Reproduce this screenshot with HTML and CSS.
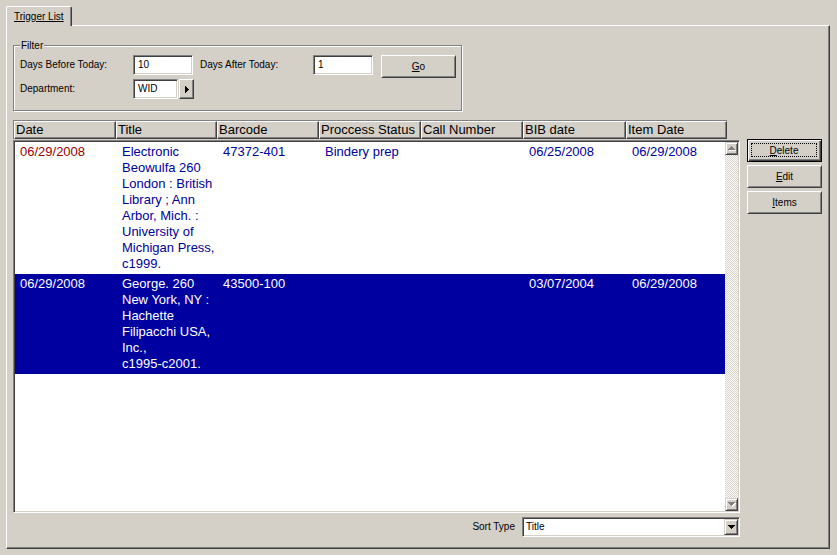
FILE: index.html
```html
<!DOCTYPE html>
<html>
<head>
<meta charset="utf-8">
<title>Trigger List</title>
<link rel="stylesheet" href="styles.css">
</head>
<body>
<div class="window">
  <div class="tabs">
    <div class="tab"><span class="u">Trigger List</span></div>
  </div>
  <div class="panel">
    <div class="main">
      <div class="group">
        <span class="group-title">Filter</span>
        <div class="filter-grid">
          <span class="lbl">Days Before Today:</span>
          <div class="field f-days">10</div>
          <span></span>
          <span class="lbl">Days After Today:</span>
          <div class="field f-days">1</div>
          <span></span>
          <div class="btn go"><span><span class="u">G</span>o</span></div>
          <span class="lbl">Department:</span>
          <div class="dept">
            <div class="field f-dept">WID</div>
            <div class="arrow-btn">
              <svg width="4" height="7" viewBox="0 0 4 7" shape-rendering="crispEdges"><rect x="0" y="0" width="1" height="7"/><rect x="1" y="1" width="1" height="5"/><rect x="2" y="2" width="1" height="3"/><rect x="3" y="3" width="1" height="1"/></svg>
            </div>
          </div>
        </div>
      </div>

      <div class="grid-header">
        <div class="hcell c1">Date</div>
        <div class="hcell c2">Title</div>
        <div class="hcell c3">Barcode</div>
        <div class="hcell c4">Proccess Status</div>
        <div class="hcell c5">Call Number</div>
        <div class="hcell c6">BIB date</div>
        <div class="hcell c7">Item Date</div>
      </div>

      <div class="list">
        <div class="rows">
          <div class="row">
            <div class="cell red">06/29/2008</div>
            <div class="cell">Electronic<br>Beowulfa 260<br>London : British<br>Library ; Ann<br>Arbor, Mich. :<br>University of<br>Michigan Press,<br>c1999.</div>
            <div class="cell">47372-401</div>
            <div class="cell">Bindery prep</div>
            <div class="cell"></div>
            <div class="cell">06/25/2008</div>
            <div class="cell">06/29/2008</div>
          </div>
          <div class="row sel">
            <div class="cell">06/29/2008</div>
            <div class="cell">George. 260<br>New York, NY :<br>Hachette<br>Filipacchi USA,<br>Inc.,<br>c1995-c2001.</div>
            <div class="cell">43500-100</div>
            <div class="cell"></div>
            <div class="cell"></div>
            <div class="cell">03/07/2004</div>
            <div class="cell">06/29/2008</div>
          </div>
        </div>
        <div class="vscroll">
          <div class="sbtn">
            <svg width="8" height="5" viewBox="0 0 8 5" shape-rendering="crispEdges"><g fill="#fff"><rect x="4" y="1" width="1" height="1"/><rect x="3" y="2" width="3" height="1"/><rect x="2" y="3" width="5" height="1"/><rect x="1" y="4" width="7" height="1"/></g><g fill="#808080"><rect x="3" y="0" width="1" height="1"/><rect x="2" y="1" width="3" height="1"/><rect x="1" y="2" width="5" height="1"/><rect x="0" y="3" width="7" height="1"/></g></svg>
          </div>
          <div class="track"></div>
          <div class="sbtn">
            <svg width="8" height="5" viewBox="0 0 8 5" shape-rendering="crispEdges"><g fill="#fff"><rect x="1" y="1" width="7" height="1"/><rect x="2" y="2" width="5" height="1"/><rect x="3" y="3" width="3" height="1"/><rect x="4" y="4" width="1" height="1"/></g><g fill="#808080"><rect x="0" y="0" width="7" height="1"/><rect x="1" y="1" width="5" height="1"/><rect x="2" y="2" width="3" height="1"/><rect x="3" y="3" width="1" height="1"/></g></svg>
          </div>
        </div>
      </div>

      <div class="sort">
        <span class="lbl sort-lbl">Sort Type</span>
        <div class="combo">
          <span class="combo-text">Title</span>
          <div class="combo-btn">
            <svg width="7" height="4" viewBox="0 0 7 4" shape-rendering="crispEdges"><rect x="0" y="0" width="7" height="1"/><rect x="1" y="1" width="5" height="1"/><rect x="2" y="2" width="3" height="1"/><rect x="3" y="3" width="1" height="1"/></svg>
          </div>
        </div>
      </div>
    </div>

    <div class="side">
      <div class="btn default"><span class="focus"><span class="u">D</span>elete</span></div>
      <div class="btn"><span><span class="u">E</span>dit</span></div>
      <div class="btn"><span><span class="u">I</span>tems</span></div>
    </div>
  </div>
</div>
</body>
</html>
```

FILE: styles.css
```css
* {
  box-sizing: border-box;
  margin: 0;
  padding: 0;
}

body {
  margin: 0;
  background: #d4d0c8;
  font-family: "Liberation Sans", Arial, sans-serif;
  font-size: 10px;
  color: #000;
}

.u {
  text-decoration: underline;
}

.window {
  width: 837px;
  height: 555px;
  background: #d4d0c8;
  overflow: hidden;
}

/* ---- tab strip ---- */
.tabs {
  height: 25px;
  padding-left: 6px;
  display: flex;
  align-items: flex-end;
}

.tab {
  position: relative;
  z-index: 1;
  width: 66px;
  height: 20px;
  margin-bottom: -1px;
  background: #d4d0c8;
  border-top: 1px solid #fff;
  border-left: 1px solid #fff;
  border-right: 1px solid #404040;
  border-radius: 2px 2px 0 0;
  box-shadow: inset -1px 0 #808080;
  padding: 3px 0 0 7px;
  line-height: 13px;
  white-space: nowrap;
}

/* ---- panel ---- */
.panel {
  width: 824px;
  height: 524px;
  margin-left: 6px;
  border: 1px solid;
  border-color: #fff #404040 #404040 #fff;
  box-shadow: inset -1px -1px #808080;
  padding: 0 6px;
  display: flex;
  gap: 7px;
}

.main {
  width: 727px;
  display: flex;
  flex-direction: column;
  align-items: flex-start;
}

/* ---- filter group ---- */
.group {
  position: relative;
  margin-top: 19px;
  width: 449px;
  height: 66px;
  border: 1px solid #808080;
  box-shadow: inset 1px 1px #fff, 1px 1px #fff;
  padding: 9px 6px 0 6px;
}

.group-title {
  position: absolute;
  top: -7px;
  left: 6px;
  padding: 0 1px;
  background: #d4d0c8;
  line-height: 13px;
}

.filter-grid {
  display: grid;
  grid-template-columns: 113px 60px 7px 113px 60px 8px 75px;
  grid-template-rows: 23px 20px;
  row-gap: 1px;
  align-items: start;
}

.lbl {
  line-height: 20px;
  white-space: nowrap;
}

.field {
  height: 20px;
  background: #fff;
  border: 1px solid;
  border-color: #808080 #fff #fff #808080;
  box-shadow: inset 1px 1px #404040, inset -1px -1px #d4d0c8;
  padding-left: 4px;
  line-height: 18px;
  white-space: nowrap;
}

.f-days {
  width: 60px;
}

.dept {
  grid-column: 2 / span 2;
  display: flex;
  gap: 1px;
}

.f-dept {
  width: 45px;
}

.arrow-btn {
  width: 15px;
  height: 20px;
  background: #d4d0c8;
  border: 1px solid;
  border-color: #fff #404040 #404040 #fff;
  box-shadow: inset -1px -1px #808080;
  display: flex;
  align-items: center;
  justify-content: center;
}

.arrow-btn svg {
  fill: #000;
  margin-left: 1px;
}

/* ---- buttons ---- */
.btn {
  width: 75px;
  height: 23px;
  background: #d4d0c8;
  border: 1px solid;
  border-color: #fff #404040 #404040 #fff;
  box-shadow: inset 1px 1px #d4d0c8, inset -1px -1px #808080;
  display: flex;
  align-items: center;
  justify-content: center;
  line-height: 13px;
  white-space: nowrap;
}

.btn.default {
  border: 1px solid #000;
  box-shadow: inset 1px 1px #fff, inset -1px -1px #404040, inset -2px -2px #808080;
  padding: 3px 4px 4px 3px;
}

.focus {
  flex: 1;
  align-self: stretch;
  border: 1px dotted #000;
  display: flex;
  align-items: center;
  justify-content: center;
}

.side {
  margin-top: 113px;
  width: 75px;
  display: flex;
  flex-direction: column;
  gap: 3px;
}

/* ---- grid header ---- */
.grid-header {
  margin-top: 9px;
  display: flex;
  border-top: 1px solid #808080;
  border-left: 1px solid #808080;
}

.hcell {
  height: 18px;
  border: 1px solid;
  border-color: #fff #404040 #404040 #fff;
  box-shadow: inset -1px -1px #808080;
  font-size: 13px;
  line-height: 16px;
  padding-left: 1px;
  white-space: nowrap;
  overflow: hidden;
}

.c1 { width: 102px; }
.c2 { width: 101px; }
.c3 { width: 102px; }
.c4 { width: 102px; }
.c5 { width: 102px; }
.c6 { width: 103px; }
.c7 { width: 101px; }

/* ---- list ---- */
.list {
  margin-top: 1px;
  width: 727px;
  height: 373px;
  background: #fff;
  border: 1px solid;
  border-color: #808080 #fff #fff #808080;
  box-shadow: inset 1px 1px #404040, inset -1px -1px #d4d0c8;
  padding: 1px;
  display: flex;
}

.rows {
  flex: 1;
  overflow: hidden;
}

.row {
  display: grid;
  grid-template-columns: 102px 101px 102px 102px 102px 103px 98px;
  padding: 2px 0;
  font-size: 13px;
  line-height: 16px;
  color: #000099;
}

.row.sel {
  background: #0000a0;
  color: #fff;
}

.cell {
  padding-left: 5px;
  white-space: nowrap;
  overflow: hidden;
}

.cell.red {
  color: #990000;
}

.vscroll {
  width: 13px;
  display: flex;
  flex-direction: column;
}

.sbtn {
  width: 13px;
  height: 13px;
  background: #d4d0c8;
  border: 1px solid;
  border-color: #d4d0c8 #404040 #404040 #d4d0c8;
  box-shadow: inset 1px 1px #fff, inset -1px -1px #808080;
  display: flex;
  align-items: center;
  justify-content: center;
}

.track {
  flex: 1;
  background: repeating-conic-gradient(#fff 0 25%, #d4d0c8 0 50%) 0 0 / 2px 2px;
}

/* ---- sort row ---- */
.sort {
  margin-top: 4px;
  width: 100%;
  display: flex;
  justify-content: flex-end;
  align-items: center;
}

.sort-lbl {
  margin-right: 7px;
}

.combo {
  width: 218px;
  height: 20px;
  background: #fff;
  border: 1px solid;
  border-color: #808080 #fff #fff #808080;
  box-shadow: inset 1px 1px #404040, inset -1px -1px #d4d0c8;
  padding: 1px 1px 1px 3px;
  display: flex;
  align-items: center;
}

.combo-text {
  flex: 1;
  line-height: 16px;
}

.combo-btn {
  width: 14px;
  height: 16px;
  background: #d4d0c8;
  border: 1px solid;
  border-color: #d4d0c8 #404040 #404040 #d4d0c8;
  box-shadow: inset 1px 1px #fff, inset -1px -1px #808080;
  display: flex;
  align-items: center;
  justify-content: center;
}

.combo-btn svg {
  fill: #000;
}
```
